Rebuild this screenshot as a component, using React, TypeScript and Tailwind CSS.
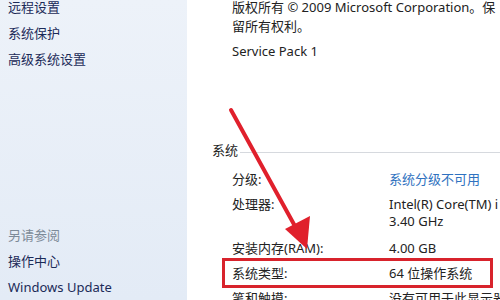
import React from "react";

const font = { fontFamily: '"Noto Sans", "Noto Sans CJK SC", sans-serif' };

function Row({ label, children, extra = "" }: { label: string; children: React.ReactNode; extra?: string }) {
  return (
    <div className={`flex pt-[4px] leading-[17px] ${extra}`}>
      <div className="w-[157px] shrink-0">{label}</div>
      <div className="whitespace-nowrap">{children}</div>
    </div>
  );
}

export default function App() {
  return (
    <div
      className="relative flex w-[500px] h-[300px] overflow-hidden bg-white text-[13px]"
      style={font}
    >
      {/* Left pane */}
      <div className="w-[187px] shrink-0 h-full flex flex-col justify-between bg-gradient-to-b from-[#edf2f9] to-[#e3ebf6] text-[#1b2a58]">
        <div className="flex flex-col mt-[-6px] pl-[8px]">
          <div className="leading-[26px]">远程设置</div>
          <div className="leading-[26px]">系统保护</div>
          <div className="leading-[27px]">高级系统设置</div>
        </div>
        <div className="flex flex-col pl-[8px]">
          <div className="leading-[26px] text-[#7d8a98]">另请参阅</div>
          <div className="leading-[26px]">操作中心</div>
          <div className="leading-[26px]">Windows Update</div>
        </div>
      </div>

      {/* Right pane */}
      <div className="flex-1 flex flex-col text-[#222222] overflow-hidden">
        <div className="pl-[45px] mt-[-2px] leading-[19px] whitespace-nowrap">
          <div>版权所有 © 2009 Microsoft Corporation。保</div>
          <div>留所有权利。</div>
        </div>
        <div className="pl-[45px] mt-[6px] leading-[19px]">Service Pack 1</div>

        <div className="flex items-center mt-[80px] pl-[25px] leading-[19px]">
          <span>系统</span>
          <div className="flex-1 h-px bg-[#d6d9de] ml-[2px] mt-[4px]" />
        </div>

        <div className="flex flex-col pl-[45px] mt-[7px]">
          <Row label="分级:" extra="pb-[4px]">
            <span className="text-[#2f72c0]">系统分级不可用</span>
          </Row>
          <Row label="处理器:" extra="pb-[6px]">
            <div>Intel(R) Core(TM) i</div>
            <div>3.40 GHz</div>
          </Row>
          <Row label="安装内存(RAM):" extra="pb-[4px]">4.00 GB</Row>
          <div className="relative">
            <Row label="系统类型:" extra="pb-[4px]">64 位操作系统</Row>
            <div className="absolute left-[-10px] top-[-3px] w-[271px] bottom-[-2px] border-[3px] border-[#d8232c]" />
          </div>
          <Row label="笔和触摸:" extra="pb-[4px]">没有可用于此显示器</Row>
        </div>
      </div>

      {/* Annotation arrow */}
      <svg
        className="absolute left-0 top-0 pointer-events-none"
        width="500"
        height="300"
        viewBox="0 0 500 300"
      >
        <line x1="231" y1="110" x2="296" y2="228" stroke="#e0202c" strokeWidth="4" strokeLinecap="round" />
        <polygon points="285,229 310,216 307,249" fill="#e0202c" />
      </svg>
    </div>
  );
}
